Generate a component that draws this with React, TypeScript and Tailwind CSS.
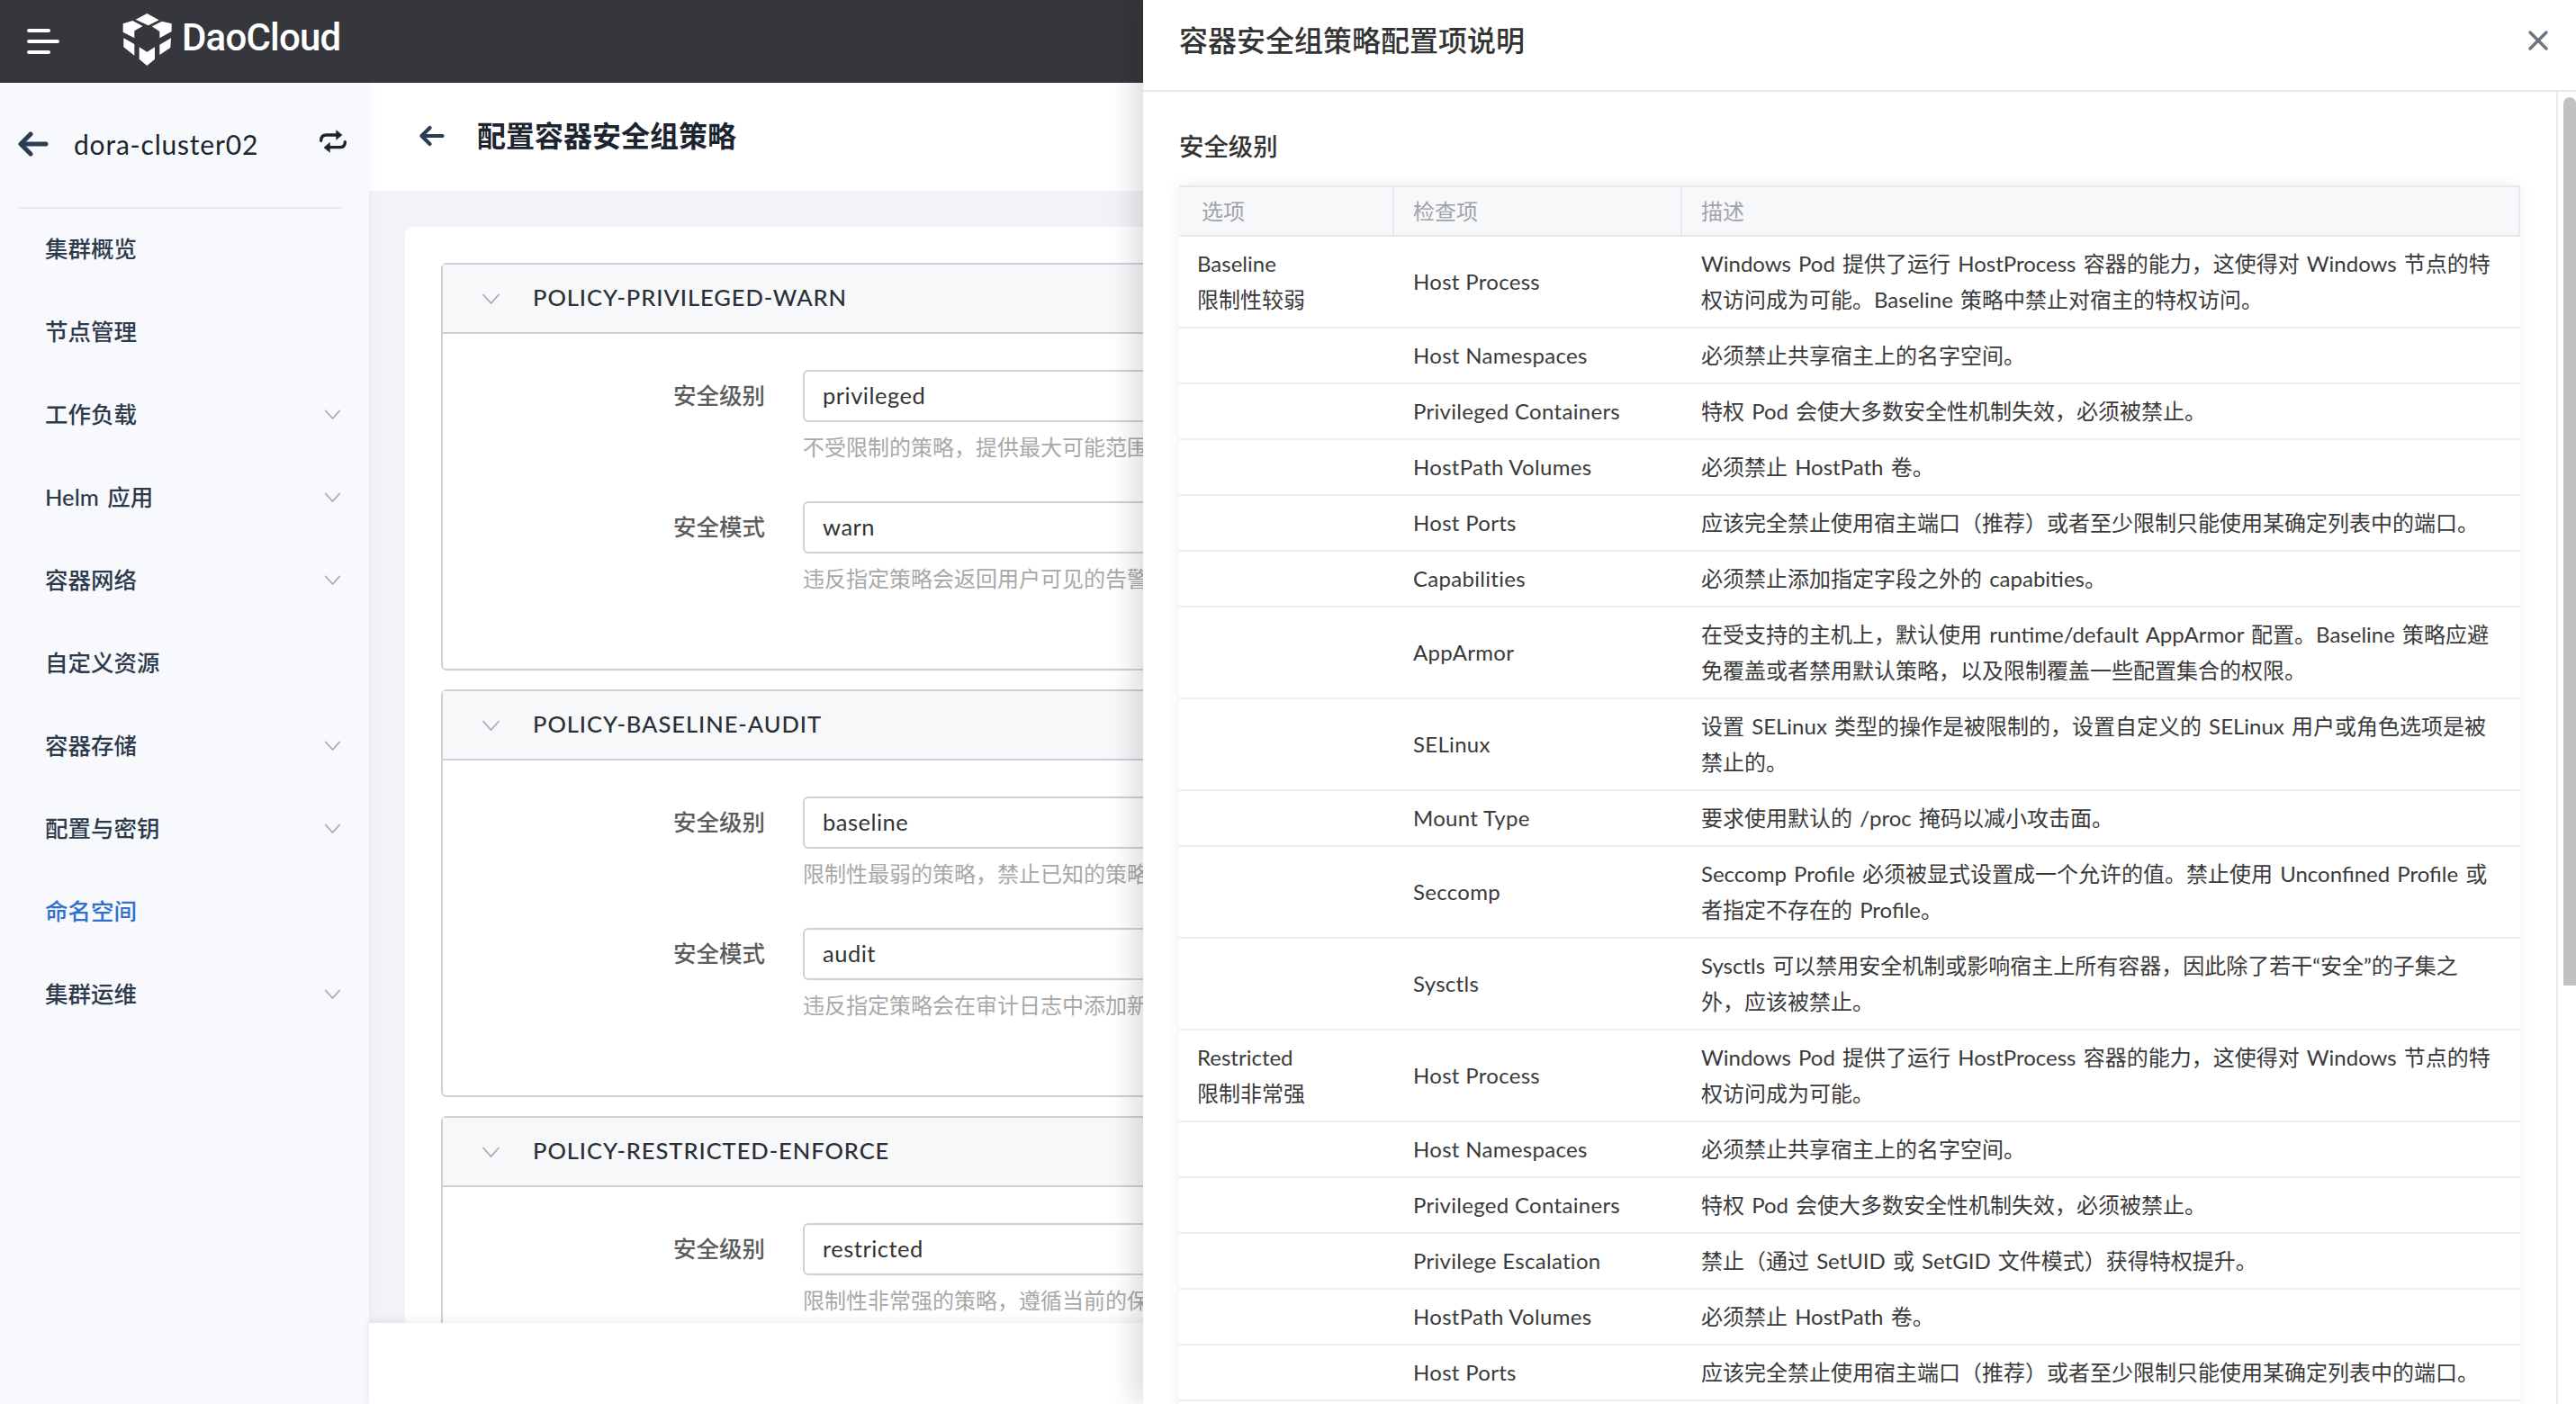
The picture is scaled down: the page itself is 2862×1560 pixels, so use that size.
import React from 'react';
import { X } from 'lucide-react';

const navItems = [
  { label: '集群概览' },
  { label: '节点管理' },
  { label: '工作负载', arrow: true },
  { label: 'Helm 应用', arrow: true },
  { label: '容器网络', arrow: true },
  { label: '自定义资源' },
  { label: '容器存储', arrow: true },
  { label: '配置与密钥', arrow: true },
  { label: '命名空间', active: true },
  { label: '集群运维', arrow: true },
];

const policies = [
  {
    title: 'POLICY-PRIVILEGED-WARN',
    fields: [
      { label: '安全级别', value: 'privileged', hint: '不受限制的策略，提供最大可能范围的权限许可。' },
      { label: '安全模式', value: 'warn', hint: '违反指定策略会返回用户可见的告警。' },
    ],
  },
  {
    title: 'POLICY-BASELINE-AUDIT',
    fields: [
      { label: '安全级别', value: 'baseline', hint: '限制性最弱的策略，禁止已知的策略提升。' },
      { label: '安全模式', value: 'audit', hint: '违反指定策略会在审计日志中添加新的审计事件。' },
    ],
  },
  {
    title: 'POLICY-RESTRICTED-ENFORCE',
    fields: [{ label: '安全级别', value: 'restricted', hint: '限制性非常强的策略，遵循当前的保护 Pod 最佳实践。' }],
  },
];

interface Row {
  option?: string[];
  item: string;
  desc: string[];
}

const rows: Row[] = [
  {
    option: ['Baseline', '限制性较弱'],
    item: 'Host Process',
    desc: [
      'Windows Pod 提供了运行 HostProcess 容器的能力，这使得对 Windows 节点的特',
      '权访问成为可能。Baseline 策略中禁止对宿主的特权访问。',
    ],
  },
  { item: 'Host Namespaces', desc: ['必须禁止共享宿主上的名字空间。'] },
  { item: 'Privileged Containers', desc: ['特权 Pod 会使大多数安全性机制失效，必须被禁止。'] },
  { item: 'HostPath Volumes', desc: ['必须禁止 HostPath 卷。'] },
  { item: 'Host Ports', desc: ['应该完全禁止使用宿主端口（推荐）或者至少限制只能使用某确定列表中的端口。'] },
  { item: 'Capabilities', desc: ['必须禁止添加指定字段之外的 capabities。'] },
  {
    item: 'AppArmor',
    desc: [
      '在受支持的主机上，默认使用 runtime/default AppArmor 配置。Baseline 策略应避',
      '免覆盖或者禁用默认策略，以及限制覆盖一些配置集合的权限。',
    ],
  },
  {
    item: 'SELinux',
    desc: ['设置 SELinux 类型的操作是被限制的，设置自定义的 SELinux 用户或角色选项是被', '禁止的。'],
  },
  { item: 'Mount Type', desc: ['要求使用默认的 /proc 掩码以减小攻击面。'] },
  {
    item: 'Seccomp',
    desc: ['Seccomp Profile 必须被显式设置成一个允许的值。禁止使用 Unconfined Profile 或', '者指定不存在的 Profile。'],
  },
  {
    item: 'Sysctls',
    desc: ['Sysctls 可以禁用安全机制或影响宿主上所有容器，因此除了若干“安全”的子集之', '外，应该被禁止。'],
  },
  {
    option: ['Restricted', '限制非常强'],
    item: 'Host Process',
    desc: ['Windows Pod 提供了运行 HostProcess 容器的能力，这使得对 Windows 节点的特', '权访问成为可能。'],
  },
  { item: 'Host Namespaces', desc: ['必须禁止共享宿主上的名字空间。'] },
  { item: 'Privileged Containers', desc: ['特权 Pod 会使大多数安全性机制失效，必须被禁止。'] },
  { item: 'Privilege Escalation', desc: ['禁止（通过 SetUID 或 SetGID 文件模式）获得特权提升。'] },
  { item: 'HostPath Volumes', desc: ['必须禁止 HostPath 卷。'] },
  { item: 'Host Ports', desc: ['应该完全禁止使用宿主端口（推荐）或者至少限制只能使用某确定列表中的端口。'] },
];

const Chevron = ({ className }: { className: string }) => (
  <svg viewBox="0 0 20 12" fill="none" stroke="currentColor" strokeWidth="1.8" className={className}>
    <path d="M1 1l9 10 9-10" />
  </svg>
);

const BackArrow = ({ className }: { className: string }) => (
  <svg viewBox="0 0 34 28" fill="none" stroke="#2b3d55" strokeWidth="5" strokeLinecap="round" strokeLinejoin="round" className={className}>
    <path d="M31 14H5" />
    <path d="M14 3L3 14l11 11" />
  </svg>
);

const Logo = () => (
  <svg viewBox="0 0 210 210" fill="#fff" className="h-[70px] w-[70px] shrink-0">
    <path d="M100 12l40 22-36 18-42-20z" />
    <path d="M20 46l32-10 34 18-28 16v24L20 74z" />
    <path d="M182 46l-32-8-34 17 26 17v22l40-22z" />
    <path d="M22 94l36 20v38l-36-28z" />
    <path d="M180 94l-38 22v34l36-24z" />
    <path d="M74 124l26 16 26-16v40l-26 22-26-22z" />
  </svg>
);

const SwapIcon = () => (
  <svg viewBox="0 0 180 150" className="h-[50px] w-[60px]" fill="none" stroke="#1c2430" strokeWidth="10" strokeLinecap="round">
    <path d="M50 64c0-12 6-19 18-19h34" />
    <path d="M130 68c0 12-6 18-18 18H78" />
    <path d="M100 28l21 17-21 17z" fill="#1c2430" stroke="none" />
    <path d="M80 68L59 87l21 17z" fill="#1c2430" stroke="none" />
  </svg>
);

export default function App() {
  return (
    <div className="relative h-[1560px] w-[2862px] overflow-hidden bg-white [font-family:Lato,'Noto_Sans_CJK_SC',sans-serif]">
      {/* 顶栏 */}
      <header className="flex h-[92px] items-center bg-[#36373d]">
        <div className="ml-[30px] flex w-[36px] flex-col gap-[8px]">
          <span className="h-[4px] w-[26px] rounded-full bg-white" />
          <span className="h-[4px] w-[36px] rounded-full bg-white" />
          <span className="h-[4px] w-[26px] rounded-full bg-white" />
        </div>
        <div className="ml-[64px] flex items-center">
          <Logo />
          <span className="mb-[10px] ml-[2px] text-[42px] font-medium tracking-[-0.8px] text-white [font-family:Roboto,sans-serif]">DaoCloud</span>
        </div>
      </header>

      <div className="flex h-[1468px]">
        {/* 侧边栏 */}
        <aside className="z-10 flex w-[410px] shrink-0 flex-col bg-[#f7f9fc] shadow-[2px_0_10px_rgba(0,0,0,0.04)]">
          <div className="ml-[20px] mr-[30px] flex h-[140px] items-center border-b-2 border-[#e8eaef] pb-[2px]">
            <BackArrow className="h-[28px] w-[34px]" />
            <span className="ml-[28px] text-[30px] tracking-[0.8px] text-[#1c2430]">dora-cluster02</span>
            <div className="-mr-[20px] ml-auto">
              <SwapIcon />
            </div>
          </div>
          <nav className="-mt-[2px]">
            {navItems.map((item) => (
              <div key={item.label} className="flex h-[92px] items-center pl-[50px] pr-[31px]">
                <span className={`text-[25.5px] font-medium [word-spacing:3px] ${item.active ? 'text-[#2e6fd0]' : 'text-[#2d3a4c]'}`}>{item.label}</span>
                {item.arrow && <Chevron className="ml-auto h-[11px] w-[19px] text-[#a9adb5]" />}
              </div>
            ))}
          </nav>
        </aside>

        <main className="flex min-w-0 flex-1 flex-col">
          <div className="flex h-[120px] shrink-0 items-center pb-[2px] pl-[56px]">
            <BackArrow className="h-[24px] w-[28px]" />
            <h1 className="ml-[36px] text-[32px] font-bold text-[#1c2430]">配置容器安全组策略</h1>
          </div>

          <div className="min-h-0 flex-1 overflow-hidden bg-[#f1f3f6] px-[40px] pt-[40px]">
            <div className="rounded-t-[8px] bg-white px-[40px] pt-[40px]">
              {policies.map((policy) => (
                <section key={policy.title} className="mb-[21px] rounded-[6px] border-2 border-[#cdd0da]">
                  <div className="flex h-[77px] items-center border-b-2 border-[#cdd0da] bg-[#f7f8fa] pl-[43px]">
                    <Chevron className="h-[12px] w-[21px] text-[#a9adb5]" />
                    <h2 className="mb-[2px] ml-[36px] text-[25.5px] font-medium tracking-[0.95px] text-[#2b2f36]">{policy.title}</h2>
                  </div>
                  <div className="pb-[80px] pt-[40px]">
                    {policy.fields.map((field) => (
                      <div key={field.label} className="mb-[40px] flex last:mb-0">
                        <label className="flex h-[58px] w-[358px] shrink-0 items-center justify-end pb-[2px] text-[25.5px] font-medium text-[#5c5c5c]">{field.label}</label>
                        <div className="ml-[42px] min-w-0 flex-1 pr-[80px]">
                          <div className="flex h-[58px] items-center rounded-[6px] border-2 border-[#cdd0da] pb-[2px] pl-[20px] text-[25.5px] tracking-[0.5px] text-[#333]">{field.value}</div>
                          <p className="mt-[8px] text-[24px] leading-[40px] text-[#a8a8a8]">{field.hint}</p>
                        </div>
                      </div>
                    ))}
                  </div>
                </section>
              ))}
            </div>
          </div>

          <div className="z-10 h-[90px] shrink-0 bg-white shadow-[0_-2px_10px_rgba(0,0,0,0.08)]" />
        </main>
      </div>

      {/* 配置项说明抽屉 */}
      <div className="absolute inset-y-0 right-0 z-20 flex w-[1592px] flex-col bg-white shadow-[-10px_0_30px_rgba(0,0,0,0.14)]">
        <div className="flex h-[102px] shrink-0 items-center border-b-2 border-[#e8e9ee] pb-[10px] pl-[40px] pr-[24px]">
          <h2 className="text-[32px] font-medium text-[#333]">容器安全组策略配置项说明</h2>
          <X className="ml-auto h-[36px] w-[36px] text-[#6e7480]" strokeWidth={2.3} />
        </div>
        <div className="flex min-h-0 flex-1">
          <div className="min-w-0 flex-1 overflow-hidden pl-[40px] pt-[41px]">
            <h3 className="mb-[23px] text-[27.4px] font-medium leading-[40px] text-[#333]">安全级别</h3>
            <table className="w-[1490px] table-fixed border-separate border-spacing-0 text-[24px] leading-[40px] text-[#3a3a3a] shadow-[0_0_14px_rgba(0,0,0,0.07)]">
              <colgroup>
                <col className="w-[239px]" />
                <col className="w-[320px]" />
                <col />
              </colgroup>
              <thead>
                <tr className="bg-[#f7f8fa] text-left text-[#a0a3aa]">
                  <th className="h-[57px] border-y-2 border-r-2 border-[#e8e9ef] pl-[25px] font-normal">选项</th>
                  <th className="border-y-2 border-r-2 border-[#e8e9ef] pl-[21px] font-normal">检查项</th>
                  <th className="border-y-2 border-r-2 border-[#e8e9ef] pl-[21px] font-normal">描述</th>
                </tr>
              </thead>
              <tbody>
                {rows.map((row, i) => (
                  <tr key={i}>
                    <td className="h-[62px] border-b-2 border-[#edeef2] py-[10px] pl-[20px]">
                      {row.option?.map((line) => <div key={line}>{line}</div>)}
                    </td>
                    <td className="border-b-2 border-[#edeef2] py-[10px] pl-[21px] tracking-[0.3px]">{row.item}</td>
                    <td className="border-b-2 border-[#edeef2] py-[10px] pl-[21px] [word-spacing:2px]">
                      {row.desc.map((line) => (
                        <div key={line} className="whitespace-nowrap">{line}</div>
                      ))}
                    </td>
                  </tr>
                ))}
                <tr>
                  <td className="h-[62px] border-b-2 border-[#edeef2]" colSpan={3} />
                </tr>
              </tbody>
            </table>
          </div>
          <div className="w-[22px] shrink-0 border-l-2 border-[#e8e9ee] pl-[6px] pt-[6px]">
            <div className="h-[987px] w-[14px] rounded-t-full bg-[#c1c1c1]" />
          </div>
        </div>
      </div>
    </div>
  );
}
